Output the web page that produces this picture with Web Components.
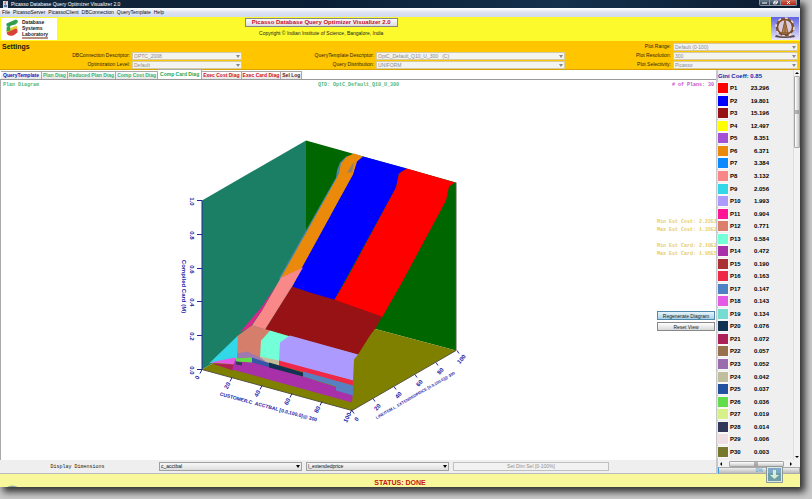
<!DOCTYPE html>
<html lang="en">
<head>
<meta charset="utf-8">
<title>Picasso Database Query Optimizer Visualizer 2.0</title>
<style>
html,body{height:100%}
body{margin:0;background:#c9c9c9;font:5px/7px "Liberation Sans",Arial,sans-serif;color:#222;box-sizing:border-box;padding:0 12px 12px 0;overflow:hidden}
</style>
</head>
<body>
<picasso-window></picasso-window>
<script>
const define = (name, html, setup) => customElements.define(name, class extends HTMLElement {
  connectedCallback() {
    if (this.shadowRoot) return;
    const t = document.createElement('template');
    t.innerHTML = typeof html === 'function' ? html(this) : html;
    this.attachShadow({mode: 'open'}).append(t.content.cloneNode(true));
    if (setup) setup(this);
  }
});

define('title-bar', `<style>
:host{display:flex;align-items:center;height:8px;background:linear-gradient(90deg,#15273b,#0a1f35 40%,#14304d 70%,#0b1c30);color:#fff;padding:0 3px;gap:3px}
svg.j{width:5px;height:7px}
h1{font:5px/8px "Liberation Sans",sans-serif;margin:0;flex:1;white-space:nowrap}
div{display:flex;align-self:flex-start}
button{display:block;border:1px solid #8796a5;border-top:0;background:linear-gradient(#66788a,#2b3b4c);padding:0;width:11px;height:6px;border-radius:0 0 0 2px}
button+button{border-radius:0;border-left:0}
button.c{width:16px;background:linear-gradient(#d07060,#b02010);border-radius:0 0 2px 0}
button svg{display:block;width:5px;height:5px;margin:auto}
</style>
<svg class="j" viewBox="0 0 5 7"><path d="M0 0h5v7H0z" fill="#cfd9e4"/><path d="M3 .5Q1 2 2.500 3.500" stroke="#d33" fill="none"/><path d="M1 4h3v2H1z" fill="#5577aa"/></svg>
<h1><slot></slot></h1>
<div><button aria-label="Minimize"><svg viewBox="0 0 5 5"><path d="M0 3h5" stroke="#fff"/></svg></button><button aria-label="Restore"><svg viewBox="0 0 5 5"><path d="M1.500 1h3v2h-3zM.5 2h3v2h-3z" stroke="#fff" stroke-width=".7" fill="#556"/></svg></button><button class="c" aria-label="Close"><svg viewBox="0 0 5 5"><path d="M1 1l3 3M4 1L1 4" stroke="#fff"/></svg></button></div>`);

define('menu-bar', `<style>
:host{display:block;height:9px;background:linear-gradient(#fff,#dde3f3 50%,#d3daee)}
nav{display:flex;gap:3px;padding:1px 2px}
button{font:5px/7px "Liberation Sans",sans-serif;color:#111;border:0;background:none;padding:0}
</style><nav><button>File</button><button>PicassoServer</button><button>PicassoClient</button><button>DBConnection</button><button>QueryTemplate</button><button>Help</button></nav>`);

define('app-banner', `<style>
:host{display:grid;grid-template-columns:57px 1fr 29px;height:24px;background:#fcfa2c}
.logo{background:#fff;display:flex;gap:2px;margin:1px 0 1px 1px;padding:1px;box-sizing:border-box}
.logo svg{width:16px;height:18px;margin-left:2px}
.logo p{margin:0;font:bold 5px/6px "Liberation Sans",sans-serif;color:#222}
.logo small{display:block;background:#b9907c;height:2px}
.mid{display:flex;flex-direction:column;align-items:center;gap:3px;padding-top:1px;width:74%}
.mid button{width:153px;height:9px;padding:0;border:1px solid #858585;background:linear-gradient(#fff,#ddd);font:bold 6px/7px "Liberation Sans",sans-serif;color:#c8102c;white-space:nowrap}
.mid p{margin:0;font:5px/7px "Liberation Sans",sans-serif;color:#222}
.seal{width:28px;height:23px;display:block}
</style>
<div class="logo"><svg viewBox="0 0 16 20"><path d="M2 5l9-4q4-1 3 3l-3 2-6 2q-4 1-3-3" fill="#2e9b4d"/><path d="M2 12l9-4q4-1 3 3l-3 2-6 2q-4 1-3-3" fill="#e3cf38"/><path d="M2 15l9-4q4-1 3 4l-4 3q-7 2-8-3" fill="#d84336"/><path d="M11 1q4-1 3 3l-3 3zM2 9l4-2v6l-4 1z" fill="#35a352"/></svg><p>Database<br>Systems<br>Laboratory<small></small></p></div>
<div class="mid"><button>Picasso Database Query Optimizer Visualizer 2.0</button><p>Copyright © Indian Institute of Science, Bangalore, India</p></div>
<svg class="seal" viewBox="0 0 28 23"><defs><linearGradient id="g" x2="0" y2="1"><stop stop-color="#5f65e0"/><stop offset="1" stop-color="#e9e6fb"/></linearGradient></defs><path d="M0 0h28v23H0z" fill="url(#g)"/><circle cx="14" cy="10" r="8" fill="#d9cbe0" stroke="#7d4b28" stroke-width="2.500"/><circle cx="14" cy="10" r="9" fill="none" stroke="#e8dcc8" stroke-width="1.500" stroke-dasharray="3 4"/><path d="M14 3l-3 13h6zM14 4v12M10 16h8" stroke="#8a5a30" fill="#b78a50"/><path d="M5 18q9 3 18 0l1 2q-10 2-20 0z" fill="#5b4640"/></svg>`);

let uid = 0;
define('drop-field', el => {
  const id = 'f' + (++uid);
  return `<style>
:host{display:grid;grid-template-columns:subgrid;align-items:center;height:9px}
label{text-align:right;white-space:nowrap;font:5px/7px "Liberation Sans",sans-serif;color:#2b2410;padding-right:2px}
.b{position:relative;display:block}
select{appearance:none;display:block;width:100%;height:8px;box-sizing:border-box;border:1px solid #d3cba8;border-radius:0;background:#f3f3f0;font:5px/6px "Liberation Sans",sans-serif;color:#8b8b8b;padding:0 1px;opacity:1}
svg{position:absolute;right:2px;top:3px;width:4px;height:3px}
</style><label for="${id}">${el.getAttribute('label')}</label><span class="b"><select id="${id}" disabled><option>${el.getAttribute('value')}</option></select><svg viewBox="0 0 4 3"><path d="M0 0h4L2 3z" fill="#888"/></svg></span>`;
});

define('settings-panel', `<style>
:host{display:grid;grid-template-columns:132fr 110fr 134fr 189fr 108fr 125fr;grid-template-rows:9px 9px 9px;background:#ffc600;border-bottom:1px solid #d9a200;padding:1px 2px 0 0}
h2{margin:0;font:bold 7px/9px "Liberation Sans",sans-serif;color:#221a00;padding-left:2px;grid-area:1/1}
drop-field{grid-column:span 2}
.a{grid-column:1/3}.b{grid-column:3/5}.c{grid-column:5/7}
.r1{grid-row:1}.r2{grid-row:2}.r3{grid-row:3}
</style><h2>Settings</h2>
<drop-field class="a r2" label="DBConnection Descriptor:" value="OPTC_2008"></drop-field>
<drop-field class="a r3" label="Optimization Level:" value="Default"></drop-field>
<drop-field class="b r2" label="QueryTemplate Descriptor:" value="OptC_Default_Q10_U_300 &nbsp; (C)"></drop-field>
<drop-field class="b r3" label="Query Distribution:" value="UNIFORM"></drop-field>
<drop-field class="c r1" label="Plot Range:" value="Default (0-100)"></drop-field>
<drop-field class="c r2" label="Plot Resolution:" value="300"></drop-field>
<drop-field class="c r3" label="Plot Selectivity:" value="Picasso"></drop-field>`);

define('tab-strip', `<style>
:host{display:flex;align-items:flex-end;height:10px;border-bottom:1px solid #999;padding-left:1px;background:#fff;box-sizing:border-box}
button{font:bold 5px/7px "Liberation Sans",sans-serif;padding:0 1px;height:8px;border:1px solid #a9a9a9;border-width:1px 1px 0 0;background:linear-gradient(#fff,#e6e6e6);color:#3cb371;white-space:nowrap}
.q{color:#1414b4;padding:0 2px}.r{color:#d01224}.k{color:#5a1a20}
.on{height:10px;background:#fff;padding:0 2px;color:#18a85a}
</style><button class="q">QueryTemplate</button><button>Plan Diag</button><button>Reduced Plan Diag</button><button>Comp Cost Diag</button><button class="on">Comp Card Diag</button><button class="r">Exec Cost Diag</button><button class="r">Exec Card Diag</button><button class="k">Sel Log</button>`);

const shapes = [
 ['#1b7f66','202,200 306,140 306,310 202,369'],
 ['#006600','306,140 456,182 456,350 306,310'],
 ['#808000','202,369 306,310 456,350 352,410'],
 ['#4b86a8','279,278 306,230 336,177 337,170 340,162 347,155 345,165 335,185 281,279'],
 ['#eb8a0a','281,277 307,231 336,179 339,173 341,163 347,156 354,153 363,156 358,161 354,174 340,198 303,268'],
 ['#9a8060','347,172 354,161 352,172'],
 ['#0000ff','302,267 330,216 353,174 357,161 363,156 407,168 399,173 396,187 334,300 292,287'],
 ['#ff0000','399,173 407,168 455,182 449,186 446,200 403,280 382,317 334,300 346,280 396,187'],
 ['#961214','292,286 310,292 334,299 382,316 376,327 370,335 358,354 265,329'],
 ['#f98888','281,277 303,267 292,286 265,329 252,325 262,310'],
 ['#d8288c','240,332 262,306 276,285 262,310 250,327'],
 ['#33d8e8','209,363 238,335 238,358'],
 ['#d67e6c','238,335 252,325 270,330 262,339 260,358 237,355'],
 ['#73ffd8','270,330 290,336 282,343 280,361 260,357 261,340'],
 ['#ad9aff','290,335 358,354 354,359 353,380 279,361 280,342'],
 ['#f02848','279,360 353,380 353,385 279,365'],
 ['#c4be9c','260,356 279,360 279,365 260,360'],
 ['#9f78ae','237,353 247,351 260,357 270,364 252,360 237,358'],
 ['#b02058','212,363 235,364 233,370'],
 ['#e45ae4','210,362 235,357 236,364'],
 ['#a830a8','235,360 252,361 303,376 353,392 352,402 232,369'],
 ['#62dc48','236,358 252,357 252,362 236,361'],
 ['#343858','236,361 242,362 242,365 236,364'],
 ['#3656a6','252,357 270,363 270,367 252,362'],
 ['#123254','269,362 303,372 303,376 269,367'],
 ['#5880c0','303,371 353,385 353,395 336,390 336,386 303,376']
];
const ticks = (a, f) => a.map(f).join('');
define('cube-plot', `<style>
:host{display:block;min-width:0}
svg{display:block;width:100%;height:100%}
text{font:bold 4px "Liberation Sans",sans-serif;fill:#1a1aa6;text-anchor:middle}
text.n{font-size:5px}
text.s{font-size:6px}
text.m{font-size:7px}
</style><svg viewBox="1 90 655 369" role="img" aria-label="Plan diagram in three dimensions">
${shapes.map(([c,p]) => `<polygon fill="${c}" points="${p}"/>`).join('')}
<path d="M202 200V369" stroke="#2525a0"/><path d="M202 369L352 410L456 350V182" stroke="#555540" fill="none"/>
<path stroke="#2525a0" d="${ticks([0,1,2,3,4,5], i => `M197 ${200+i*34-(i>2?1:0)}h5M${202+i*30} ${369+i*8}l-2 4M${352+i*21} ${410-i*12}l2 3`)}"/>
${ticks(['1.0','0.8','0.6','0.4','0.2','0.0'], (t,i) => `<text class="s" transform="translate(190 ${201+i*34-(i>2?1:0)}) rotate(90)">${t}</text>`)}
${ticks(['0','20','40','60','80','100'], (t,i) => `<text class="s" transform="translate(${199+i*30} ${378+i*8}) rotate(-62)">${t}</text><text class="s" transform="translate(${358+i*21} ${420-i*12}) rotate(-50)">${t}</text>`)}
<text class="s" transform="translate(182 286) rotate(90)">Compiled Card (M)</text>
<text class="n" transform="translate(268 408) rotate(15)">CUSTOMER.C_ACCTBAL [0.0,100.0]@ 300</text>
<text transform="translate(416 396) rotate(-30)">LINEITEM.L_EXTENDEDPRICE [0.0,100.0]@ 300</text>
</svg>`);

define('plot-view', `<style>
:host{display:flex;flex-direction:column;min-height:0;background:#fff;border-left:1px solid #aaa;font:bold 5px/7px "Liberation Mono",monospace}
header{display:grid;grid-template-columns:1fr 1fr 1fr;padding:2px 2px 1px;color:#4cba80}
header :nth-child(2){text-align:center}
header :nth-child(3){text-align:right;color:#c850c8}
main{flex:1;min-height:0;display:grid;grid-template-columns:1fr 60px}
aside{padding:128px 1px 0;color:#e6cc62;white-space:pre;overflow:hidden;box-sizing:border-box;min-width:0}
p{margin:0 0 8px;line-height:8px}
button{display:block;width:100%;height:9px;margin-bottom:2px;padding:0;border:1px solid #888;background:linear-gradient(#fff,#d9d9d9);font:5px/6px "Liberation Sans",sans-serif;color:#222}
p+button{margin-top:53px;background:linear-gradient(#e8f5fc,#a4d2ee);border-color:#4f8aac}
</style><header><span>Plan Diagram</span><span>QTD: OptC_Default_Q10_U_300</span><span># of Plans: 30</span></header>
<main><cube-plot></cube-plot><aside><p>Min Est Cost: 2.22E1
Max Est Cost: 1.35E2</p><p>Min Est Card: 2.10E2
Max Est Card: 1.95E5</p><button>Regenerate Diagram</button><button>Reset View</button></aside></main>`);

define('dimension-bar', `<style>
:host{display:grid;grid-template-columns:155fr 143fr 143fr 156fr 103fr;column-gap:4px;align-items:center;height:14px;background:#efefef;border-bottom:1px solid #bbb;box-sizing:border-box}
label{font:5px/8px "Liberation Mono",monospace;text-align:center;color:#222}
.b{position:relative}
select,button{appearance:none;display:block;width:100%;height:9px;box-sizing:border-box;border:1px solid #a0a0a0;border-radius:0;background:linear-gradient(#f8f8f8,#dedede);font:5px/7px "Liberation Sans",sans-serif;color:#111;padding:0 1px}
button{background:#f2f2f2;color:#909090;border-color:#c0c0c0}
svg{position:absolute;right:2px;top:3px;width:4px;height:3px}
</style><label for="d1">Display Dimensions</label>
<span class="b"><select id="d1"><option>c_acctbal</option></select><svg viewBox="0 0 4 3"><path d="M0 0h4L2 3z"/></svg></span>
<span class="b"><select aria-label="Second dimension"><option>l_extendedprice</option></select><svg viewBox="0 0 4 3"><path d="M0 0h4L2 3z"/></svg></span>
<button disabled>Set Dim Sel [0-100%]</button>`);

const plans = `ff0000 23.296,0000ff 19.801,961214 15.196,ffff00 12.497,a352d6 8.351,eb8a0a 6.371,0a8aff 3.384,f88888 3.132,33d8e8 2.056,ad9aff 1.993,ff1493 0.904,dc7e6c 0.771,73ffd8 0.584,a830a8 0.472,aa3034 0.190,f02848 0.163,5080c4 0.147,e45ae4 0.143,76dcd2 0.134,123254 0.076,ac2058 0.072,98704c 0.057,9a6cae 0.052,c0be9c 0.042,2450a0 0.037,62dc48 0.036,d8f088 0.019,343858 0.014,f0dfe2 0.006,78782c 0.003`.split(',').map(s => s.split(' '));
define('plan-legend', `<style>
:host{display:grid;grid-template-columns:1fr 7px;grid-template-rows:1fr 7px 7px;background:#efefef;border-left:2px solid #c4c8cc;box-sizing:border-box;min-height:0}
section{display:flex;flex-direction:column;min-height:0;font:bold 6px/12px "Liberation Sans",sans-serif;color:#000}
h3{margin:0;font:bold 6px/12px "Liberation Sans",sans-serif;color:#1c1ca8;white-space:nowrap}
ul{list-style:none;margin:0 0 2px;padding:0;flex:1;min-height:0;display:grid;grid-template-rows:repeat(30,1fr)}
li{display:grid;grid-template-columns:10px 18px 1fr;column-gap:2px;align-items:center;min-height:0}
li :nth-child(3){text-align:right;padding-right:24px}
i{display:block;height:10px;box-shadow:0 0 0 1px #fff8}
.v{border-left:1px solid #ddd;display:flex;flex-direction:column;justify-content:space-between;align-items:center;background:#f2f2f2}
.h{grid-column:1/3;display:flex;justify-content:space-between;align-items:center;background:#f2f2f2;padding-right:6px}
.t{border:1px solid #a5a5a5;background:linear-gradient(90deg,#fff,#c8c8c8);box-sizing:border-box;border-radius:1px}
.v .t{width:6px;height:72px;margin-bottom:auto;background:linear-gradient(90deg,#fff,#c8c8c8)}
.h .t{width:55px;height:6px;background:linear-gradient(#fff,#c8c8c8)}
.t svg{display:block;margin:auto}.v .t svg{margin-top:33px}
svg{width:4px;height:4px;margin:1px}
.p{grid-column:1/3;background:linear-gradient(#eee,#bbb);border:1px solid #aaa;border-left:1px solid #3a9adb;text-align:center;font:5px/5px "Liberation Sans",sans-serif;color:#3a93d6}
</style><section><h3>Gini Coeff: 0.85</h3><ul>${plans.map(([c,v],i) => `<li><i style="background:#${c}"></i><span>P${i+1}</span><span>${v}</span></li>`).join('')}</ul></section>
<div class="v"><svg viewBox="0 0 4 4"><path d="M0 3l2-2 2 2z"/></svg><div class="t"><svg viewBox="0 0 4 4"><path d="M0 1h4M0 3h4" stroke="#777"/></svg></div><svg viewBox="0 0 4 4"><path d="M0 1l2 2 2-2z"/></svg></div>
<div class="h"><svg viewBox="0 0 4 4"><path d="M3 0L1 2l2 2z"/></svg><div class="t"><svg viewBox="0 0 4 4"><path d="M1 0v4M3 0v4" stroke="#777"/></svg></div><svg viewBox="0 0 4 4"><path d="M1 0l2 2-2 2z"/></svg></div>
<div class="p" role="progressbar" aria-valuenow="0">0%</div>`);

define('status-bar', `<style>
:host{display:block;position:relative;height:13px;background:#f9f79c;text-align:center;font:bold 7px/9px "Liberation Sans",sans-serif;color:#c8140c;padding-top:4px;box-sizing:border-box}
.d{position:absolute;right:17px;bottom:4px;width:17px;height:17px}
.o{position:absolute;left:7px;bottom:0;width:11px;height:2px}
</style><slot></slot><svg class="o" viewBox="0 0 11 2"><path d="M0 2q5-3 11 0z" fill="#8fae9c"/></svg>
<svg class="d" viewBox="0 0 17 17"><path d="M.5.5h16v16H.5z" fill="#dfe6e4" stroke="#8e9896"/><path d="M2 2h13v13H2z" fill="#6f9fa6"/><path d="M2 2h13v5H2z" fill="#7fa7c6"/><path d="M7 4h3v5h3l-4.500 4L4 9h3z" fill="#d5efdc"/></svg>`);

define('picasso-window', `<style>
:host{display:flex;flex-direction:column;height:100%;background:#fff;box-shadow:4px 4px 7px 1px rgba(0,0,0,.75)}
.body{flex:1;min-height:0;display:grid;grid-template-columns:1fr 84px}
.left{display:flex;flex-direction:column;min-height:0;min-width:0}
plot-view{flex:1}
</style><title-bar>Picasso Database Query Optimizer Visualizer 2.0</title-bar><menu-bar></menu-bar><app-banner></app-banner><settings-panel></settings-panel>
<div class="body"><div class="left"><tab-strip></tab-strip><plot-view></plot-view><dimension-bar></dimension-bar></div><plan-legend></plan-legend></div>
<status-bar>STATUS: DONE</status-bar>`);
</script>
</body>
</html>
